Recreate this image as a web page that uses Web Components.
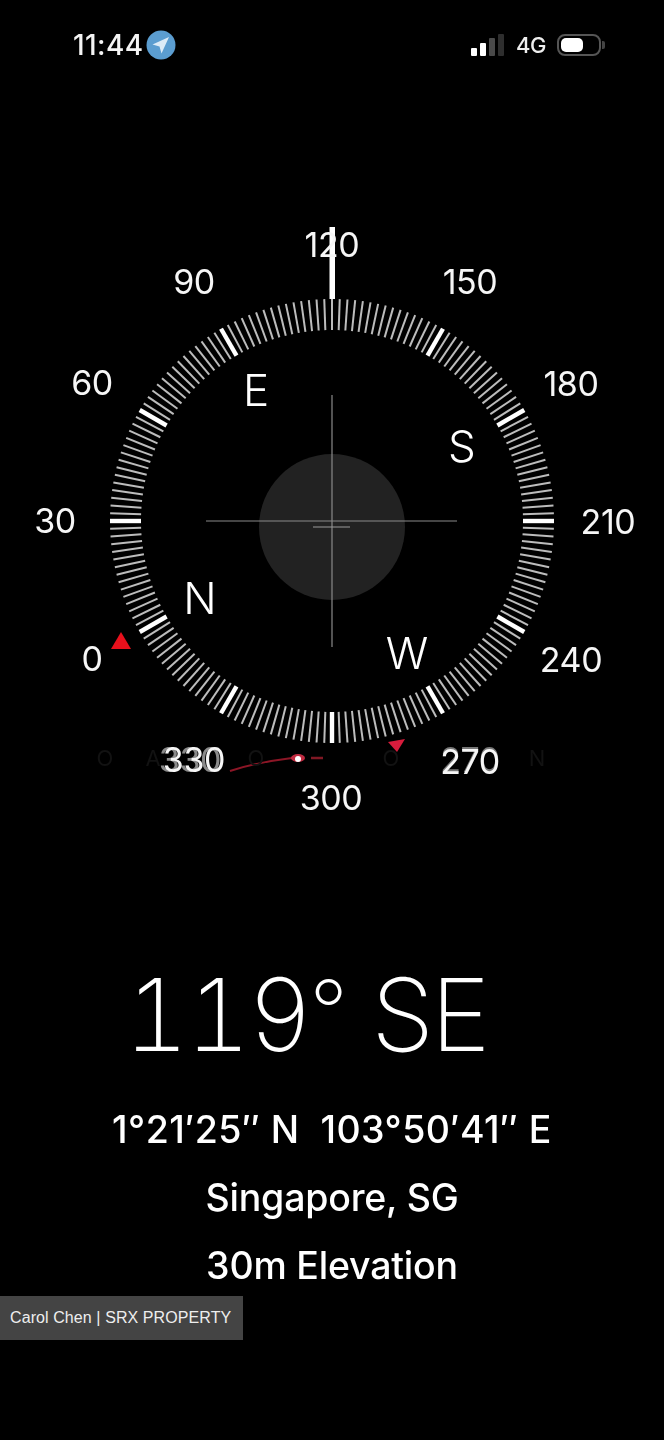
<!DOCTYPE html>
<html>
<head>
<meta charset="utf-8">
<title>Compass</title>
<style>
  html, body { margin: 0; background: #000; }
  body { font-family: Inter, "Liberation Sans", sans-serif; color: #fff; }
</style>
</head>
<body>
<compass-screen>
  <status-bar time="11:44" network="4G"></status-bar>
  <compass-dial></compass-dial>
  <heading-readout heading="119° SE">
    <span>1°21′25″ N&nbsp; 103°50′41″ E</span>
    <span>Singapore, SG</span>
    <span>30m Elevation</span>
  </heading-readout>
  <photo-credit>Carol Chen | SRX PROPERTY</photo-credit>
</compass-screen>

<script>
class CompassScreen extends HTMLElement {
    connectedCallback() {
        const shadow = this.attachShadow({mode: "open"})
        shadow.innerHTML = `
            <style>
                :host {
                    display: flex;
                    flex-direction: column;
                    width: 664px;
                    height: 1440px;
                    overflow: hidden;
                    background: #000;
                }
            </style>
            <slot></slot>
        `
    }
}

class StatusBar extends HTMLElement {
    connectedCallback() {
        const shadow = this.attachShadow({mode: "open"})
        shadow.innerHTML = `
            <style>
                :host {
                    display: flex;
                    align-items: center;
                    justify-content: space-between;
                    height: 30px;
                    margin-top: 30px;
                    padding: 0 63px 0 73px;
                    filter: blur(.4px);
                }
                .left, .right { display: flex; align-items: center; }
                .time {
                    font: 500 28px/30px Inter, sans-serif;
                    letter-spacing: .4px;
                    color: #f4f4f4;
                }
                .left svg { margin-left: 3px; }
                .net {
                    font: 500 22px/30px Inter, sans-serif;
                    margin: 0 11px;
                    letter-spacing: -.5px;
                    color: #eee;
                }
                .battery {
                    box-sizing: border-box;
                    width: 44px;
                    height: 22px;
                    border: 2px solid #555;
                    border-radius: 8px;
                    padding: 2px;
                    position: relative;
                }
                .battery i {
                    display: block;
                    width: 22px;
                    height: 14px;
                    background: #fff;
                    border-radius: 5px;
                }
                .battery::after {
                    content: "";
                    position: absolute;
                    right: -6px;
                    top: 5px;
                    width: 3px;
                    height: 8px;
                    background: #444;
                    border-radius: 0 2px 2px 0;
                }
            </style>
            <div class="left">
                <span class="time">${this.getAttribute("time")}</span>
                <svg width="30" height="30" viewBox="0 0 30 30">
                    <ellipse cx="15" cy="15" rx="14.5" ry="14.5" fill="#5b9dd0"/>
                    <path d="M23 7 L6.500 14.500 L13.500 16.500 L15.500 23.500 Z" fill="#dcebf7"/>
                </svg>
            </div>
            <div class="right">
                <svg width="34" height="24" viewBox="0 0 34 24">
                    <rect x="0" y="15" width="6" height="8" rx="1" fill="#fff"/>
                    <rect x="9" y="10" width="6" height="13" rx="1" fill="#fff"/>
                    <rect x="18" y="5" width="6" height="18" rx="1" fill="#4a4a4a"/>
                    <rect x="27" y="1" width="6" height="22" rx="1" fill="#2e2e2e"/>
                </svg>
                <span class="net">${this.getAttribute("network")}</span>
                <div class="battery"><i></i></div>
            </div>
        `
    }
}

// center of the dial inside the element's own box
const CX = 332
const CY = 331

class CompassDial extends HTMLElement {
    connectedCallback() {
        const shadow = this.attachShadow({mode: "open"})

        let ticks = ""
        for (let deg = 0; deg < 360; deg += 2) {
            const major = deg % 30 == 0 && deg != 0
            const a = deg * Math.PI / 180
            const r1 = 191, r2 = 222
            const p = [r1, r2].map(r => [CX + r * Math.sin(a), CY - r * Math.cos(a)])
            ticks += `<line x1="${p[0][0].toFixed(2)}" y1="${p[0][1].toFixed(2)}" x2="${p[1][0].toFixed(2)}" y2="${p[1][1].toFixed(2)}"
                stroke="${major ? "#fff" : "#bcbcbc"}" stroke-width="${major ? 4.4 : 2}"/>`
        }

        const degrees = [
            ["120", 332, 245], ["90", 194, 282], ["150", 470, 282],
            ["60", 92, 383], ["180", 571, 384], ["30", 55, 521], ["210", 608, 522],
            ["0", 92, 659], ["240", 571, 660], ["330", 194, 760, "ghost"],
            ["270", 470, 762, "ghost2"], ["300", 331, 798]
        ]
        const points = [["E", 256, 390], ["S", 462, 446], ["N", 200, 598], ["W", 407, 653]]
        const faint = [["O", 105], ["A", 153], ["O", 256], ["O", 391], ["N", 537]]

        const place = (x, y) => `left:${x}px;top:${y - 190}px`

        shadow.innerHTML = `
            <style>
                :host {
                    display: block;
                    position: relative;
                    width: 664px;
                    height: 670px;
                    margin-top: 130px;
                    filter: blur(.5px);
                }
                svg { position: absolute; left: 0; top: 0; }
                .t {
                    position: absolute;
                    transform: translate(-50%, -50%);
                    font-family: Inter, sans-serif;
                    line-height: 1;
                    white-space: nowrap;
                }
                .deg { font-size: 34px; font-weight: 400; letter-spacing: -.4px; color: #f6f6f6; }
                .pt { font-size: 44px; font-weight: 300; color: #fff; }
                .faint { font-size: 22px; color: #121212; }
                .ghost { text-shadow: -4px 0 0 #8a8a8a; }
                .ghost2 { text-shadow: 0 -2px 0 #777; }
            </style>
            <svg width="664" height="670" viewBox="0 0 664 670">
                <circle cx="${CX}" cy="${CY + 6}" r="73" fill="#222"/>
                <line x1="206" y1="${CY}" x2="457" y2="${CY}" stroke="#8a8a8a" stroke-width="1.2"/>
                <line x1="${CX}" y1="205" x2="${CX}" y2="457" stroke="#8a8a8a" stroke-width="1.2"/>
                <line x1="313" y1="${CY + 6}" x2="350" y2="${CY + 6}" stroke="#9a9a9a" stroke-width="1.2"/>
                ${ticks}
                <rect x="329.500" y="37" width="5.500" height="72" fill="#fff"/>
                <path d="M121 442 L131 459 L111 459 Z" fill="#e8101c"/>
                <path d="M388 552 L405 549 L397 562 Z" fill="#d81c3c"/>
                <path d="M230 581 Q258 572 292 568" fill="none" stroke="#8c1626" stroke-width="2"/>
                <ellipse cx="298" cy="568" rx="7" ry="4" fill="#c02a40"/>
                <circle cx="298" cy="569" r="3" fill="#fff"/>
                <line x1="311" y1="568" x2="323" y2="568" stroke="#801824" stroke-width="2.500"/>
            </svg>
            ${faint.map(f => `<span class="t faint" style="${place(f[1], 758)}">${f[0]}</span>`).join("")}
            ${degrees.map(d => `<span class="t deg ${d[3] || ""}" style="${place(d[1], d[2])}">${d[0]}</span>`).join("")}
            ${points.map(d => `<span class="t pt" style="${place(d[1], d[2])}">${d[0]}</span>`).join("")}
        `
    }
}

class HeadingReadout extends HTMLElement {
    connectedCallback() {
        const shadow = this.attachShadow({mode: "open"})
        const heading = this.getAttribute("heading").replace("°", `<span class="sign">°</span>`)
        shadow.innerHTML = `
            <style>
                :host {
                    display: flex;
                    flex-direction: column;
                    align-items: center;
                    margin-top: 92px;
                    color: #fff;
                    font-family: Inter, sans-serif;
                    filter: blur(.35px);
                }
                .heading {
                    font-size: 101px;
                    line-height: 124px;
                    font-weight: 200;
                    white-space: nowrap;
                    font-variant-numeric: tabular-nums;
                    letter-spacing: -3.500px;
                    margin-right: 53px;
                }
                .sign { font-size: 84px; letter-spacing: 0; line-height: 0; vertical-align: 10px; }
                .details {
                    display: flex;
                    flex-direction: column;
                    align-items: center;
                    margin-top: 31px;
                    gap: 23px;
                }
                ::slotted(span) {
                    font-size: 37.500px;
                    line-height: 45px;
                    font-weight: 500;
                    letter-spacing: -.2px;
                    white-space: nowrap;
                }
                ::slotted(span:first-child) {
                    letter-spacing: .45px;
                }
            </style>
            <div class="heading">${heading}</div>
            <div class="details"><slot></slot></div>
        `
    }
}

class PhotoCredit extends HTMLElement {
    connectedCallback() {
        const shadow = this.attachShadow({mode: "open"})
        shadow.innerHTML = `
            <style>
                :host {
                    display: block;
                    align-self: flex-start;
                    margin-top: 8px;
                    padding: 0 12px 0 10px;
                    background: #444;
                    color: #eee;
                    font: 16px/44px "Liberation Sans", Arial, sans-serif;
                    letter-spacing: .09px;
                }
            </style>
            <slot></slot>
        `
    }
}

customElements.define("compass-screen", CompassScreen)
customElements.define("status-bar", StatusBar)
customElements.define("compass-dial", CompassDial)
customElements.define("heading-readout", HeadingReadout)
customElements.define("photo-credit", PhotoCredit)
</script>
</body>
</html>
